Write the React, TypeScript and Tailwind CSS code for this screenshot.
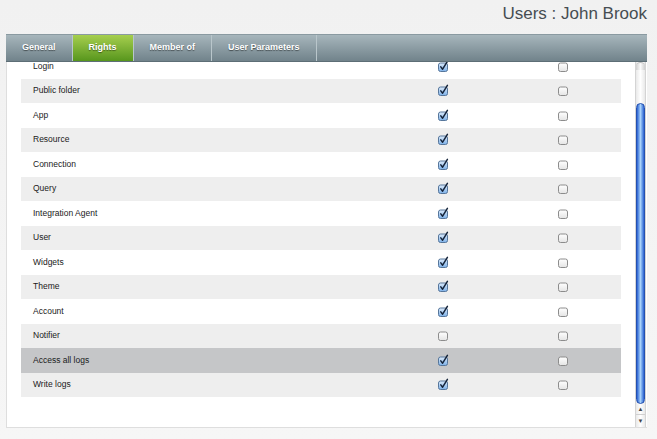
import React from "react";

// Lignes de droits affichées dans l'onglet "Rights"
const rights: { label: string; read: boolean; write: boolean }[] = [
  { label: "Login", read: true, write: false },
  { label: "Public folder", read: true, write: false },
  { label: "App", read: true, write: false },
  { label: "Resource", read: true, write: false },
  { label: "Connection", read: true, write: false },
  { label: "Query", read: true, write: false },
  { label: "Integration Agent", read: true, write: false },
  { label: "User", read: true, write: false },
  { label: "Widgets", read: true, write: false },
  { label: "Theme", read: true, write: false },
  { label: "Account", read: true, write: false },
  { label: "Notifier", read: false, write: false },
  { label: "Access all logs", read: true, write: false },
  { label: "Write logs", read: true, write: false },
];

const tabs = ["General", "Rights", "Member of", "User Parameters"];

// Case à cocher façon Aqua
function Check({ checked }: { checked: boolean }) {
  return (
    <svg width="13" height="13" viewBox="0 0 13 13">
      <defs>
        <linearGradient id="cbOn" x1="0" y1="0" x2="0" y2="1">
          <stop offset="0" stopColor="#dcebfb" />
          <stop offset="1" stopColor="#7cb0e8" />
        </linearGradient>
        <linearGradient id="cbOff" x1="0" y1="0" x2="0" y2="1">
          <stop offset="0" stopColor="#ffffff" />
          <stop offset="1" stopColor="#e4e4e4" />
        </linearGradient>
      </defs>
      <rect
        x="1.5"
        y="3"
        width="9"
        height="8.5"
        rx="2"
        fill={checked ? "url(#cbOn)" : "url(#cbOff)"}
        stroke={checked ? "#56769b" : "#8c8c8c"}
        strokeWidth="1"
      />
      {checked && (
        <path d="M3.8 6.9 L5.6 9.2 L10.4 1.4" fill="none" stroke="#14233a" strokeWidth="1.5" strokeLinecap="round" strokeLinejoin="round" />
      )}
    </svg>
  );
}

function App() {
  return (
    <div className="w-[657px] h-[439px] overflow-hidden bg-gradient-to-b from-[#f1f1f1] to-[#f6f6f6] font-['Liberation_Sans',Arial,sans-serif]">
      {/* Titre de la page */}
      <div className="h-[34px] flex justify-end pr-[10px] pt-[5px]">
        <h1 className="text-[17px] leading-none text-[#464d52]">Users : John Brook</h1>
      </div>

      <div className="ml-[6px] w-[641px]">
        {/* Barre d'onglets */}
        <div className="h-[28px] flex bg-gradient-to-b from-[#a7b6bc] to-[#71838b] border-t border-[#8a9aa1] border-b border-b-[#5d6e76]">
          {tabs.map((t) => (
            <div
              key={t}
              className={
                t === "Rights"
                  ? "h-full flex items-center px-4 border-r border-[#b9c6cb] bg-gradient-to-b from-[#a6cf4e] to-[#57961c] text-white text-[9px] font-bold [text-shadow:0_1px_1px_rgba(0,0,0,0.45)]"
                  : "h-full flex items-center px-4 border-r border-[#b9c6cb] text-white text-[9px] font-bold [text-shadow:0_1px_1px_rgba(0,0,0,0.5)]"
              }
            >
              {t}
            </div>
          ))}
        </div>

        {/* Contenu défilant */}
        <div className="h-[366px] flex bg-white border-l border-b border-[#dedede]">
          <div className="w-[614px] pl-[14px] overflow-hidden">
            <div className="-mt-[8px]">
              {rights.map((r, i) => (
                <div
                  key={r.label}
                  className={
                    r.label === "Access all logs"
                      ? "h-[24.5px] flex items-center bg-[#c5c6c8]"
                      : i % 2 === 1
                      ? "h-[24.5px] flex items-center bg-[#eeeeee]"
                      : "h-[24.5px] flex items-center bg-white"
                  }
                >
                  <div className="w-[412px] pl-[12px] text-[8.5px] text-[#1a1a1a]">{r.label}</div>
                  <div className="w-[20px] flex justify-center">
                    <Check checked={r.read} />
                  </div>
                  <div className="w-[100px]" />
                  <div className="w-[20px] flex justify-center">
                    <Check checked={r.write} />
                  </div>
                </div>
              ))}
            </div>
          </div>

          {/* Barre de défilement */}
          <div className="ml-[14px] w-[11px] flex flex-col border-x border-[#d4d4d4] bg-gradient-to-r from-[#e9e9e9] via-white to-[#e9e9e9]">
            <div className="h-[8px] rounded-t-full border-t border-[#bdbdbd] bg-gradient-to-r from-[#cfcfcf] via-[#fafafa] to-[#cfcfcf]" />
            <div className="h-[33px]" />
            <div className="h-[301px] rounded-full bg-gradient-to-r from-[#2a5fd0] via-[#a9d2fa] to-[#2a5fd0] border border-[#2350b0]" />
            <div className="flex-1 flex flex-col">
              <div className="h-[11px] flex items-center justify-center border-b border-[#d0d0d0] text-[6px] leading-none text-[#444]">▲</div>
              <div className="flex-1 flex items-center justify-center text-[6px] leading-none text-[#444]">▼</div>
            </div>
          </div>
        </div>
      </div>
    </div>
  );
}

export default App;
